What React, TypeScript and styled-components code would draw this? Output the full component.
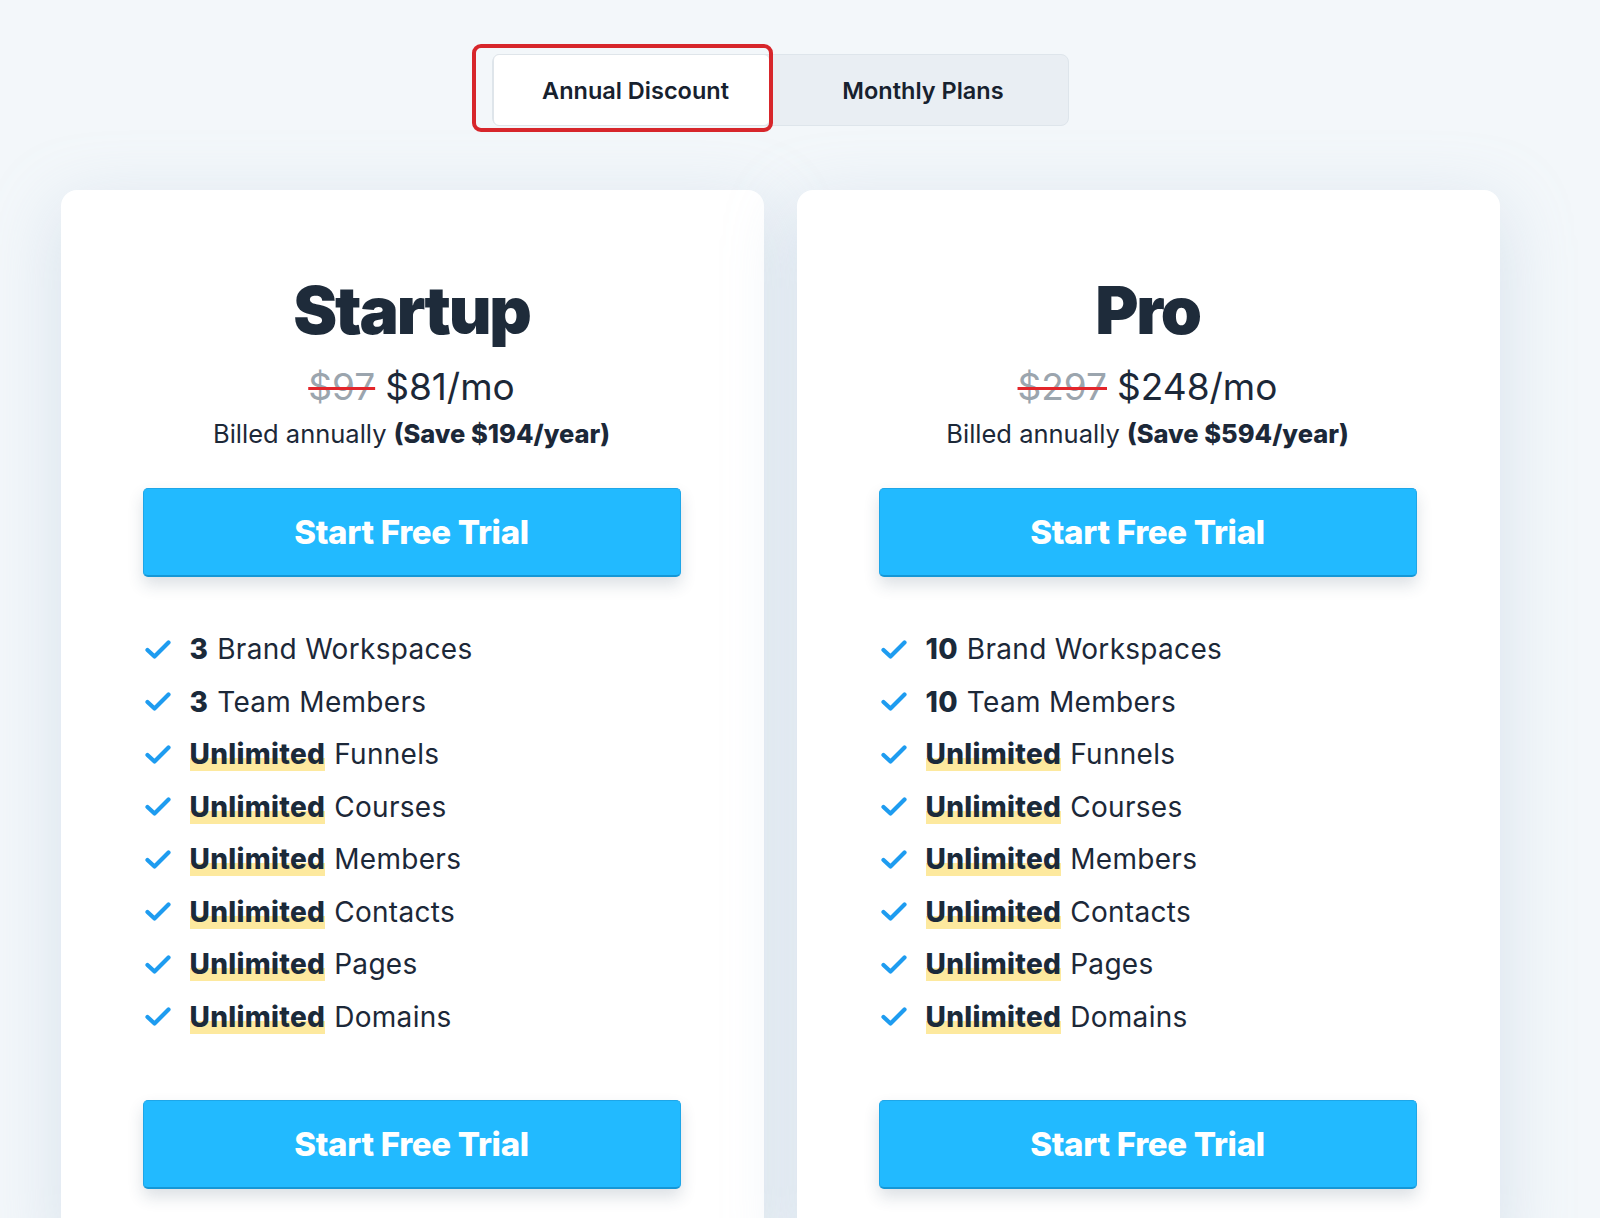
import React, { FC } from 'react';
import styled, { createGlobalStyle } from 'styled-components';

const GlobalStyle = createGlobalStyle`
  * {
    box-sizing: border-box;
  }

  body {
    margin: 0;
    background: #f3f7fa;
    font-family: Inter, "Noto Sans", sans-serif;
    color: #1c2a3a;
    overflow: hidden;
  }
`;

const Page = styled.div`
  width: 1438px;
  margin-left: 61px;
  padding-top: 54px;
  display: flex;
  flex-direction: column;
  align-items: center;
`;

const Toggle = styled.div`
  flex-shrink: 0;
  display: flex;
  height: 72px;
  background: #e9eef3;
  border: 1px solid #dee5eb;
  border-radius: 8px;
`;

const Tab = styled.button<{ $active?: boolean; $width: number }>`
  position: relative;
  width: ${p => p.$width}px;
  margin: -1px 0;
  padding: 0 0 0 9px;
  border: 1px solid ${p => (p.$active ? '#dfe5ea' : 'transparent')};
  border-radius: 6px;
  background: ${p => (p.$active ? '#ffffff' : 'transparent')};
  font-family: Inter, sans-serif;
  font-size: 23.5px;
  font-weight: 600;
  color: #17212e;
  cursor: pointer;
`;

// the red annotation frame drawn around the active tab
const Highlight = styled.span`
  position: absolute;
  left: -22px;
  top: -11px;
  right: -4px;
  bottom: -7px;
  border: 4px solid #d7262b;
  border-radius: 9px;
  pointer-events: none;
`;

const Cards = styled.div`
  margin-top: 64px;
  display: grid;
  grid-template-columns: 703px 703px;
  gap: 33px;
`;

const Card = styled.section`
  background: #ffffff;
  border-radius: 16px;
  box-shadow: 0 18px 70px rgba(165, 188, 214, 0.36);
  padding: 80px 83px 60px 82px;
  display: flex;
  flex-direction: column;
  align-items: center;
`;

const Title = styled.h2`
  margin: 0;
  font-size: 66px;
  line-height: 80px;
  font-weight: 900;
  letter-spacing: -2.2px;
  color: #1e2b3a;
`;

const Price = styled.div`
  margin-top: 14px;
  font-size: 37px;
  line-height: 46px;
  font-weight: 400;
  color: #1c2838;
`;

const OldPrice = styled.span`
  color: #9ba5ae;
  text-decoration: line-through;
  text-decoration-color: #e3262b;
  text-decoration-thickness: 3px;
  margin-right: 10px;
`;

const Billed = styled.div`
  margin-top: 9px;
  font-size: 25.5px;
  line-height: 30px;
  color: #1c2838;

  b {
    font-weight: 800;
  }
`;

const TrialButton = styled.button<{ $gap: number }>`
  flex-shrink: 0;
  margin-top: ${p => p.$gap}px;
  width: 538px;
  height: 89px;
  border: 1px solid #1ea6e8;
  border-bottom: 2px solid #1597d6;
  border-radius: 5px;
  background: #22baff;
  box-shadow: 0 8px 16px rgba(40, 60, 90, 0.16);
  color: #ffffff;
  font-family: Inter, sans-serif;
  font-size: 33px;
  font-weight: 800;
  letter-spacing: -0.3px;
  cursor: pointer;
`;

const Features = styled.ul`
  list-style: none;
  margin: 46px 0 0;
  padding: 0;
  align-self: stretch;
`;

const Feature = styled.li`
  height: 52.5px;
  display: flex;
  align-items: center;
  gap: 19px;
  padding-left: 2px;
  font-size: 28px;
  letter-spacing: 0.3px;
  color: #1c2838;
`;

const Strong = styled.b<{ $marked?: boolean }>`
  font-weight: 800;
  color: #1b2a3a;
  margin-right: 9px;
  background: ${p =>
    p.$marked ? 'linear-gradient(to bottom, transparent 62%, #fde99e 62%)' : 'none'};
`;

const Check: FC = () => (
  <svg width="26" height="19" viewBox="0 0 26 19" fill="none">
    <path
      d="M2.5 10 L9.5 16.5 L23.5 2.5"
      stroke="#1e9cf0"
      strokeWidth="4.2"
      strokeLinecap="round"
      strokeLinejoin="round"
    />
  </svg>
);

type Plan = {
  name: string;
  oldPrice: string;
  price: string;
  save: string;
  seats: number;
};

const plans: Plan[] = [
  { name: 'Startup', oldPrice: '$97', price: '$81/mo', save: '$194', seats: 3 },
  { name: 'Pro', oldPrice: '$297', price: '$248/mo', save: '$594', seats: 10 },
];

const unlimited = ['Funnels', 'Courses', 'Members', 'Contacts', 'Pages', 'Domains'];

const PlanCard: FC<{ plan: Plan }> = ({ plan }) => (
  <Card>
    <Title>{plan.name}</Title>
    <Price>
      <OldPrice>{plan.oldPrice}</OldPrice>
      {plan.price}
    </Price>
    <Billed>
      Billed annually <b>(Save {plan.save}/year)</b>
    </Billed>
    <TrialButton $gap={39}>Start Free Trial</TrialButton>
    <Features>
      <Feature>
        <Check />
        <span>
          <Strong>{plan.seats}</Strong>Brand Workspaces
        </span>
      </Feature>
      <Feature>
        <Check />
        <span>
          <Strong>{plan.seats}</Strong>Team Members
        </span>
      </Feature>
      {unlimited.map(item => (
        <Feature key={item}>
          <Check />
          <span>
            <Strong $marked>Unlimited</Strong>
            {item}
          </span>
        </Feature>
      ))}
    </Features>
    <TrialButton $gap={57}>Start Free Trial</TrialButton>
  </Card>
);

const App: FC = () => (
  <>
    <GlobalStyle />
    <Page>
      <Toggle>
        <Tab $active $width={277}>
          <Highlight />
          Annual Discount
        </Tab>
        <Tab $width={298}>Monthly Plans</Tab>
      </Toggle>
      <Cards>
        {plans.map(plan => (
          <PlanCard key={plan.name} plan={plan} />
        ))}
      </Cards>
    </Page>
  </>
);

export default App;
